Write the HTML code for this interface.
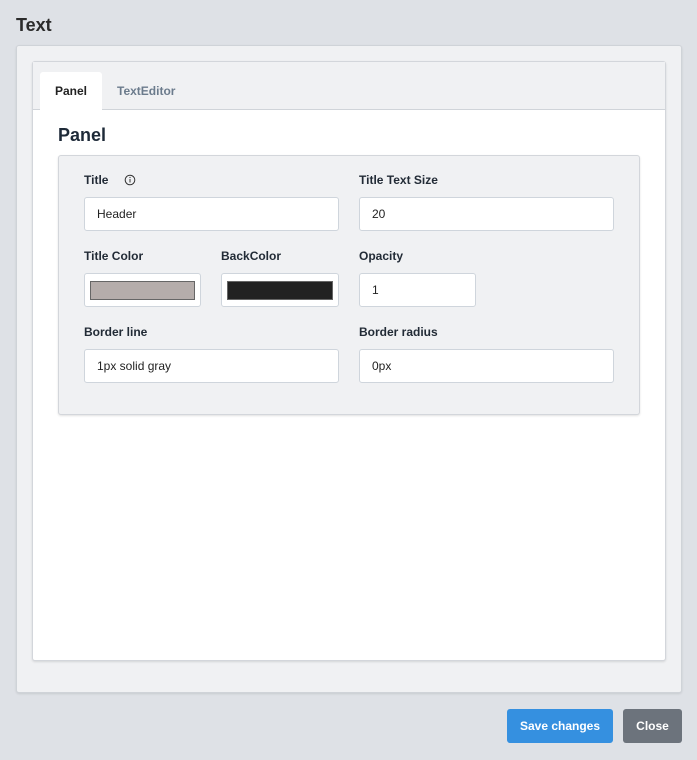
<!DOCTYPE html>
<html><head><meta charset="utf-8"><style>
*{box-sizing:border-box;margin:0;padding:0}
body{width:697px;height:760px;background:#dee1e6;font-family:"Liberation Sans",sans-serif;position:relative;overflow:hidden;color:#1f2937}
.abs{position:absolute}
h1{position:absolute;left:16px;top:15px;font-size:18px;font-weight:bold;color:#2b2b2b}
.outer{left:16px;top:45px;width:666px;height:648px;background:#f0f1f3;border:1px solid #cfd3d8;border-radius:3px;box-shadow:0 1px 2px rgba(0,0,0,.1)}
.card{left:32px;top:61px;width:634px;height:600px;background:#fff;border:1px solid #d3d6db;border-radius:3px;box-shadow:0 1px 2px rgba(0,0,0,.12)}
.tabbar{left:33px;top:62px;width:632px;height:48px;background:#f0f1f3;border-bottom:1px solid #d0d4d9}
.tab1{left:40px;top:72px;width:62px;height:39px;background:#fff;border-radius:3px 3px 0 0;font-size:12px;font-weight:bold;color:#222;text-align:center;line-height:38px}
.tab2{left:117px;top:84px;font-size:12px;font-weight:bold;color:#6b7b8c}
.h2{left:58px;top:125px;font-size:18px;font-weight:bold;color:#1e2a38}
.inner{left:58px;top:155px;width:582px;height:260px;background:#f0f1f3;border:1px solid #d3d6db;border-radius:3px;box-shadow:0 1px 2px rgba(0,0,0,.12)}
.lbl{font-size:12px;font-weight:bold;color:#222b36}
.inp{background:#fff;border:1px solid #cfd5dc;border-radius:3px;height:34px;font-size:12px;color:#222;padding-left:12px;line-height:32px}
.sw{position:absolute;left:5px;top:7px;height:19px;border:1px solid #666}
.btn{top:709px;height:34px;border-radius:3px;color:#fff;font-size:12px;font-weight:bold;text-align:center;line-height:34px}
</style></head><body>
<h1>Text</h1>
<div class="abs outer"></div>
<div class="abs card"></div>
<div class="abs tabbar"></div>
<div class="abs tab1">Panel</div>
<div class="abs tab2">TextEditor</div>
<div class="abs h2">Panel</div>
<div class="abs inner"></div>

<div class="abs lbl" style="left:84px;top:173px">Title</div>
<svg class="abs" style="left:124px;top:174px" width="12" height="12" viewBox="0 0 12 12"><circle cx="6" cy="6" r="4.8" fill="none" stroke="#333" stroke-width="1"/><line x1="6" y1="5" x2="6" y2="8.5" stroke="#333" stroke-width="1"/><circle cx="6" cy="3.5" r=".6" fill="#333"/></svg>
<div class="abs inp" style="left:84px;top:197px;width:255px">Header</div>
<div class="abs lbl" style="left:359px;top:173px">Title Text Size</div>
<div class="abs inp" style="left:359px;top:197px;width:255px">20</div>

<div class="abs lbl" style="left:84px;top:249px">Title Color</div>
<div class="abs inp" style="left:84px;top:273px;width:117px"><div class="sw" style="width:105px;background:#b5adab"></div></div>
<div class="abs lbl" style="left:221px;top:249px">BackColor</div>
<div class="abs inp" style="left:221px;top:273px;width:118px"><div class="sw" style="width:106px;background:#222"></div></div>
<div class="abs lbl" style="left:359px;top:249px">Opacity</div>
<div class="abs inp" style="left:359px;top:273px;width:117px">1</div>

<div class="abs lbl" style="left:84px;top:325px">Border line</div>
<div class="abs inp" style="left:84px;top:349px;width:255px">1px solid gray</div>
<div class="abs lbl" style="left:359px;top:325px">Border radius</div>
<div class="abs inp" style="left:359px;top:349px;width:255px">0px</div>

<div class="abs btn" style="left:507px;width:106px;background:#3590e0">Save changes</div>
<div class="abs btn" style="left:623px;width:59px;background:#6c737c">Close</div>
</body></html>
